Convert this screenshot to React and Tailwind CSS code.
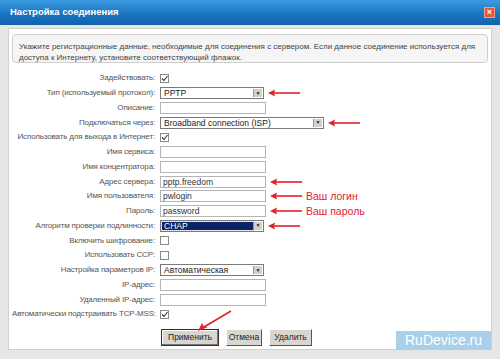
import React from "react";

const font = { fontFamily: '"Liberation Sans", Arial, sans-serif' };

// red annotation arrow pointing left
function Arrow({ w = 32 }) {
  return (
    <svg width={w} height="8" viewBox={`0 0 ${w} 8`} className="shrink-0">
      <line x1="4" y1="4" x2={w} y2="4" stroke="#e3202b" strokeWidth="1.6" />
      <path d="M0 4 L7 0.5 L6 4 L7 7.5 Z" fill="#e3202b" />
    </svg>
  );
}

function Check({ checked }) {
  return (
    <div className="w-[9px] h-[9px] border border-[#8a8a8a] bg-white flex items-center justify-center">
      {checked && (
        <svg width="7" height="7" viewBox="0 0 7 7">
          <path d="M1 3.5 L3 5.5 L6.5 1" stroke="#333" strokeWidth="1.1" fill="none" />
        </svg>
      )}
    </div>
  );
}

function Input({ value = "" }) {
  return (
    <div className="w-[106px] h-[12px] border border-[#b5b5b5] bg-white px-[2px] text-[8.5px] leading-[10px] text-[#333]">
      {value}
    </div>
  );
}

function Select({ value, w = "w-[104px]", active }) {
  return (
    <div className={`${w} h-[12px] border border-[#7a7a7a] bg-white flex items-stretch p-[1px]`}>
      <div
        className={`flex-1 px-[2px] text-[8.5px] leading-[8px] whitespace-nowrap ${
          active ? "bg-[#0b2466] text-white outline outline-1 outline-dotted outline-[#ccc]" : "text-[#222]"
        }`}
      >
        {value}
      </div>
      <div className="w-[9px] bg-[#d4d0c8] border-l border-[#999] flex items-center justify-center text-[5px] leading-none text-[#222]">
        ▼
      </div>
    </div>
  );
}

const rows = [
  { label: "Задействовать:", control: <Check checked /> },
  { label: "Тип (используемый протокол):", control: <Select value="PPTP" />, arrow: true },
  { label: "Описание:", control: <Input /> },
  { label: "Подключаться через:", control: <Select value="Broadband connection (ISP)" w="w-[164px]" />, arrow: true },
  { label: "Использовать для выхода в Интернет:", control: <Check checked /> },
  { label: "Имя сервиса:", control: <Input /> },
  { label: "Имя концентратора:", control: <Input /> },
  { label: "Адрес сервера:", control: <Input value="pptp.freedom" />, arrow: true },
  { label: "Имя пользователя:", control: <Input value="pwlogin" />, arrow: true, note: "Ваш логин" },
  { label: "Пароль:", control: <Input value="password" />, arrow: true, note: "Ваш пароль" },
  { label: "Алгоритм проверки подлинности:", control: <Select value="CHAP" active />, arrow: true },
  { label: "Включить шифрование:", control: <Check /> },
  { label: "Использовать CCP:", control: <Check /> },
  { label: "Настройка параметров IP:", control: <Select value="Автоматическая" /> },
  { label: "IP-адрес:", control: <Input /> },
  { label: "Удаленный IP-адрес:", control: <Input /> },
  { label: "Автоматически подстраивать TCP-MSS:", control: <Check checked /> },
];

function Btn({ children, focused, w }) {
  return (
    <div
      className={`${w} h-[17px] flex items-center justify-center text-[8.5px] text-[#222] bg-[#d9d6cf] border ${
        focused
          ? "border-[#333] shadow-[inset_-1px_-1px_0_#777,inset_1px_1px_0_#fff]"
          : "border-t-[#fff] border-l-[#fff] border-r-[#555] border-b-[#555]"
      }`}
    >
      {children}
    </div>
  );
}

export default function App() {
  return (
    <div className="w-[500px] h-[359px] bg-[#e6e6e6] overflow-hidden" style={font}>
      {/* title bar */}
      <div className="h-[25px] bg-gradient-to-b from-[#3b9be0] via-[#1b78c4] to-[#0f62aa] flex items-center justify-between pl-[10px] pr-[5px]">
        <span className="text-white font-bold text-[9.5px]">Настройка соединения</span>
        <div className="w-[11px] h-[11px] bg-[#e2583a] border border-[#f2a08a] flex items-center justify-center text-white text-[9px] font-bold leading-none">
          ×
        </div>
      </div>

      <div className="px-[8px] pt-[3px]">
        <div className="relative h-[322px] bg-white border border-[#d0d0d0] pt-[5px] px-[3px]">
          {/* info box */}
          <div className="h-[29px] bg-[#f5f5f5] border border-[#cfcfcf] rounded-[4px] px-[6px] pt-[6px] text-[8px] leading-[11px] text-[#444] whitespace-nowrap">
            Укажите регистрационные данные, необходимые для соединения с сервером. Если данное соединение используется для
            <br />
            доступа к Интернету, установите соответствующий флажок.
          </div>

          {/* form */}
          <div className="mt-[8px] flex flex-col">
            {rows.map((r) => (
              <div key={r.label} className="h-[14.75px] flex items-center">
                <div className="w-[146px] shrink-0 text-right text-[8px] tracking-[-0.15px] text-[#555] pr-[3px] whitespace-nowrap">
                  {r.label}
                </div>
                <div className="ml-[2px] flex items-center">{r.control}</div>
                {r.arrow && (
                  <div className="ml-[4px] flex items-center">
                    <Arrow />
                  </div>
                )}
                {r.note && (
                  <span className="ml-[4px] text-[10.5px] text-[#e3202b] leading-none">{r.note}</span>
                )}
              </div>
            ))}
          </div>

          {/* buttons */}
          <div className="mt-[7px] flex items-center gap-[7px] pl-[149px]">
            <Btn focused w="w-[58px]">Применить</Btn>
            <Btn w="w-[36px]">Отмена</Btn>
            <Btn w="w-[43px]">Удалить</Btn>
          </div>

          {/* diagonal arrow to apply button */}
          <svg className="absolute left-[188px] top-[281px]" width="36" height="22" viewBox="0 0 36 22">
            <line x1="34" y1="1" x2="7" y2="17" stroke="#e3202b" strokeWidth="1.6" />
            <path d="M1 21 L5 13 L7 16.5 L11 17 Z" fill="#e3202b" />
          </svg>

          {/* watermark */}
          <div className="absolute right-[0px] bottom-[-1px] w-[95px] h-[19px] bg-[#a8d0ea] flex items-center justify-center text-white text-[14px] whitespace-nowrap">
            RuDevice.ru
          </div>
        </div>
      </div>
    </div>
  );
}
